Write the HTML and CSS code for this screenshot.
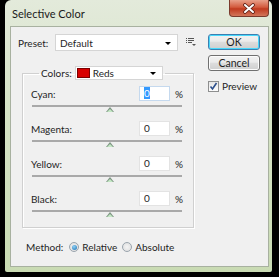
FILE: index.html
```html
<!DOCTYPE html>
<html>
<head>
<meta charset="utf-8">
<link rel="stylesheet" href="styles.css">
</head>
<body>
<div class="win">
  <div class="titlebar">
    <span class="title">Selective Color</span>
    <div class="close">
      <svg width="14" height="11" viewBox="0 0 14 11"><path d="M3 2 L11 9 M11 2 L3 9" stroke="#5a1e14" stroke-width="3.6" stroke-linecap="round"/><path d="M3 2 L11 9 M11 2 L3 9" stroke="#ffffff" stroke-width="2" stroke-linecap="round"/></svg>
    </div>
  </div>
  <div class="client">
    <div class="main">
      <div class="preset-row">
        <span class="lbl">Preset:</span>
        <div class="select preset-select"><span class="val">Default</span><span class="arrow"></span></div>
        <svg class="opts" width="10" height="9" viewBox="0 0 10 9">
          <rect x="0" y="0" width="1" height="1" fill="#555"/><rect x="2" y="0" width="6" height="1" fill="#555"/>
          <rect x="0" y="2" width="1" height="1" fill="#555"/><rect x="2" y="2" width="6" height="1" fill="#555"/>
          <rect x="0" y="4" width="1" height="1" fill="#555"/><rect x="2" y="4" width="4" height="1" fill="#555"/>
          <path d="M6 6 L10 6 L8 8 Z" fill="#555"/>
        </svg>
      </div>
      <fieldset class="group">
        <legend class="legend">
          <span class="lbl">Colors:</span>
          <div class="select color-select"><span class="swatch"></span><span class="val">Reds</span><span class="arrow"></span></div>
        </legend>
        <div class="row">
          <span class="lbl">Cyan:</span>
          <span class="input focused"><span class="sel">0</span></span>
          <span class="pct">%</span>
          <div class="slider"><span class="thumb"></span></div>
        </div>
        <div class="row">
          <span class="lbl">Magenta:</span>
          <span class="input">0</span>
          <span class="pct">%</span>
          <div class="slider"><span class="thumb"></span></div>
        </div>
        <div class="row">
          <span class="lbl">Yellow:</span>
          <span class="input">0</span>
          <span class="pct">%</span>
          <div class="slider"><span class="thumb"></span></div>
        </div>
        <div class="row">
          <span class="lbl">Black:</span>
          <span class="input">0</span>
          <span class="pct">%</span>
          <div class="slider"><span class="thumb"></span></div>
        </div>
      </fieldset>
      <div class="method">
        <span class="lbl">Method:</span>
        <span class="radio on"></span><span class="rlbl">Relative</span>
        <span class="radio"></span><span class="rlbl">Absolute</span>
      </div>
    </div>
    <div class="side">
      <div class="btn ok">OK</div>
      <div class="btn">Cancel</div>
      <div class="chk"><span class="box"><svg width="9" height="9" viewBox="0 0 9 9"><path d="M1.5 4.5 L3.5 7 L7.5 1" stroke="#2c4f8c" stroke-width="1.6" fill="none"/></svg></span><span>Preview</span></div>
    </div>
  </div>
</div>
</body>
</html>
```

FILE: styles.css
```css
* { box-sizing: border-box; }
html, body { margin: 0; padding: 0; }
body {
  background: #000;
  width: 279px;
  height: 277px;
  overflow: hidden;
  font-family: Lato, "Noto Sans", sans-serif;
  font-size: 10px;
  color: #1e1e1e;
}
.win {
  margin-left: 5px;
  width: 267px;
  height: 272px;
  border-radius: 6px 6px 2px 2px;
  background: linear-gradient(#e3eadb, #d6e3c6 40%, #c9dbb3);
  padding: 0 3px 5px 5px;
  display: flex;
  flex-direction: column;
}
.titlebar {
  height: 26px;
  display: flex;
  justify-content: space-between;
  align-items: flex-start;
}
.title {
  margin: 7px 0 0 2px;
  font-size: 11px;
  color: #1a1a1a;
}
.close {
  width: 40px;
  height: 17px;
  margin-right: 0;
  border: 1px solid #7a3a2c;
  border-top: none;
  border-radius: 0 0 4px 4px;
  background: linear-gradient(#e8a08a, #d35b3e 45%, #c03a1f 55%, #d2765a);
  display: flex;
  align-items: center;
  justify-content: center;
}
.client {
  flex: 1;
  background: #f0f0f0;
  border: 1px solid #a8b1a0;
  display: flex;
  padding: 7px 0 0 0;
}
.main {
  width: 188px;
  display: flex;
  flex-direction: column;
}
.lbl { white-space: nowrap; }
.preset-row {
  display: flex;
  align-items: center;
  height: 17px;
  padding-left: 7px;
}
.preset-row .lbl { width: 37px; }
.select {
  background: #fff;
  border: 1px solid #d5d5d5;
  display: flex;
  align-items: center;
  position: relative;
}
.preset-select {
  width: 123px;
  height: 17px;
  padding-left: 4px;
}
.arrow {
  position: absolute;
  right: 6px;
  top: 50%;
  margin-top: -1px;
  border-left: 3px solid transparent;
  border-right: 3px solid transparent;
  border-top: 3px solid #000;
}
.opts { margin-left: 8px; }
.group {
  margin: 15px 0 0 11px;
  width: 172px;
  height: 162px;
  border: 1px solid #d0d0d0;
  box-shadow: inset 1px 1px 0 #fff, 1px 1px 0 #fff;
  padding: 6px 9px 0 8px;
  display: flex;
  flex-direction: column;
}
.legend {
  margin-left: 8px;
  padding: 0 2px;
  display: flex;
  align-items: center;
}
.legend .lbl { margin-right: 3px; }
.color-select {
  width: 88px;
  height: 14px;
  padding-left: 1px;
}
.swatch {
  width: 13px;
  height: 10px;
  background: #d80000;
  border: 1px solid #7a0000;
  margin-right: 3px;
}
.row {
  display: grid;
  grid-template-columns: 1fr 31px 14px;
  align-items: center;
  height: 35px;
  align-content: start;
}
.input {
  height: 15px;
  background: #fff;
  border: 1px solid #e3e3e3;
  padding-left: 4px;
  line-height: 13px;
}
.input.focused { border-color: #c5d9ee; }
.sel { background: #3399ff; color: #fff; }
.pct { padding-left: 5px; }
.slider {
  grid-column: 1 / 4;
  height: 2px;
  background: #a9a9a9;
  margin: 4px 2px 0 1px;
  position: relative;
}
.thumb {
  position: absolute;
  left: 74px;
  top: 2px;
  width: 0;
  height: 0;
  border-left: 4px solid transparent;
  border-right: 4px solid transparent;
  border-bottom: 5px solid #7d9482;
}
.thumb::after {
  content: "";
  position: absolute;
  left: -3px;
  top: 1.5px;
  border-left: 3px solid transparent;
  border-right: 3px solid transparent;
  border-bottom: 3px solid #c4e8c4;
}
.method {
  display: flex;
  align-items: center;
  margin-top: 13px;
  padding-left: 15px;
}
.method .lbl { margin-right: 6px; }
.radio {
  width: 10px;
  height: 10px;
  border-radius: 50%;
  border: 1px solid #9aa4ad;
  background: radial-gradient(#f4f4f4, #dcdcdc);
  margin-right: 3px;
  display: flex;
  align-items: center;
  justify-content: center;
}
.radio.on::after {
  content: "";
  width: 5px;
  height: 5px;
  border-radius: 50%;
  background: radial-gradient(circle at 40% 35%, #8fd1f5, #1a6fb3);
}
.rlbl { margin-right: 5px; }
.side {
  display: flex;
  flex-direction: column;
  padding-left: 9px;
}
.btn {
  width: 52px;
  height: 16px;
  border: 1px solid #707070;
  border-radius: 3px;
  background: linear-gradient(#f2f2f2, #ebebeb 45%, #dddddd 50%, #cfcfcf);
  box-shadow: inset 0 0 0 1px #fcfcfc;
  text-align: center;
  line-height: 14px;
  margin-bottom: 5px;
  font-size: 10.5px;
}
.btn.ok {
  border-color: #3c7fb1;
  box-shadow: inset 0 0 0 1px #48d8fb;
}
.chk {
  display: flex;
  align-items: center;
  margin-top: 4px;
}
.box {
  width: 11px;
  height: 11px;
  border: 1px solid #8e8f8f;
  background: linear-gradient(#e6e6e6, #fdfdfd);
  margin-right: 3px;
  display: flex;
  align-items: center;
  justify-content: center;
}
```
